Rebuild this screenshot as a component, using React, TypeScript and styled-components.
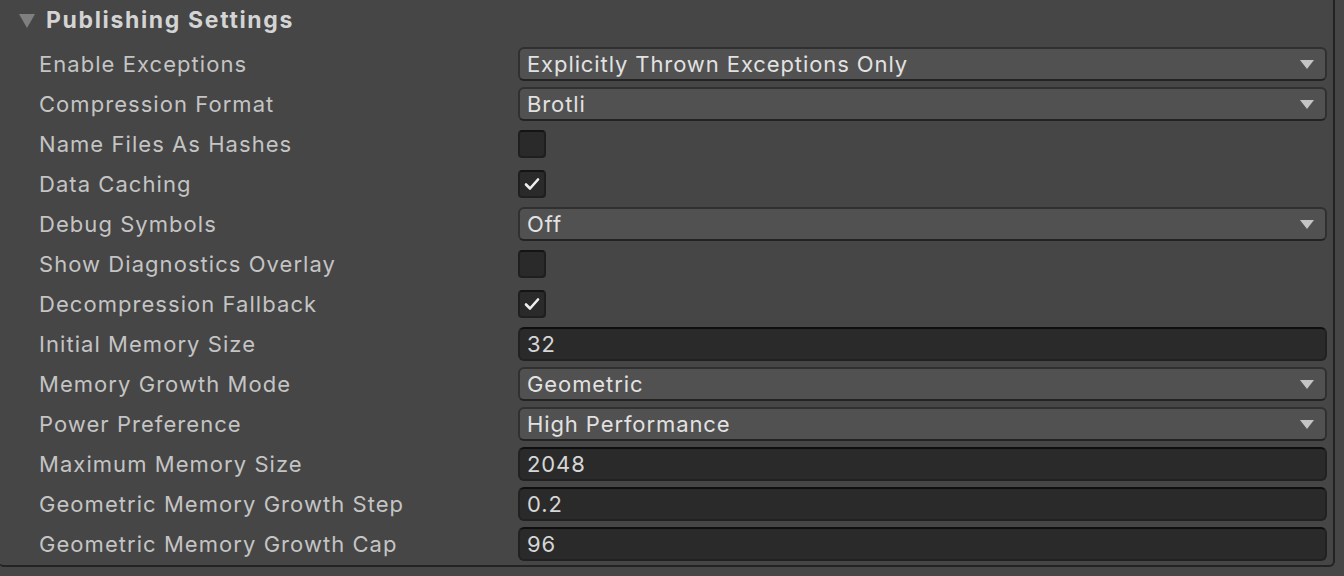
import React from "react";
import styled, { createGlobalStyle } from "styled-components";

const Global = createGlobalStyle`
  html, body { margin: 0; padding: 0; background: #464646; }
  body { font-family: Inter, "Noto Sans", sans-serif; overflow: hidden; }
`;

const Panel = styled.div`
  width: 1337px;
  height: 567px;
  margin-left: -2px;
  box-sizing: border-box;
  background: #464646;
  border-right: 2px solid #232323;
  border-bottom: 2px solid #232323;
  border-bottom-right-radius: 6px;
  border-bottom-left-radius: 6px;
`;

const Header = styled.div`
  height: 40px;
  margin-bottom: 4px;
  display: flex;
  align-items: center;
  padding-left: 21px;
  gap: 11px;
  color: #d4d4d4;
  font-weight: 700;
  font-size: 23px;
  letter-spacing: 1.65px;
`;

const Triangle = styled.span`
  width: 0;
  height: 0;
  border-left: 8px solid transparent;
  border-right: 8px solid transparent;
  border-top: 14px solid #7f7f7f;
  margin-top: 2px;
`;

const Row = styled.div`
  height: 40px;
  display: grid;
  grid-template-columns: 479px 809px;
  align-items: center;
  padding-left: 41px;
`;

const Label = styled.div`
  color: #c4c4c4;
  font-size: 22px;
  letter-spacing: 1.05px;
  white-space: nowrap;
`;

const Dropdown = styled.div`
  height: 34px;
  box-sizing: border-box;
  background: #515151;
  border: 2px solid #303030;
  border-bottom-color: #232323;
  border-radius: 6px;
  display: flex;
  align-items: center;
  padding: 0 10px 0 7px;
  color: #e2e2e2;
  font-size: 22px;
  letter-spacing: 0.9px;
`;

const DropText = styled.span`
  flex: 1;
`;

const Arrow = styled.span`
  width: 0;
  height: 0;
  border-left: 7px solid transparent;
  border-right: 7px solid transparent;
  border-top: 9px solid #c4c4c4;
  margin-right: 1px;
`;

const Field = styled.div`
  height: 34px;
  box-sizing: border-box;
  background: #2a2a2a;
  border: 2px solid #212121;
  border-top-color: #0f0f0f;
  border-radius: 6px;
  display: flex;
  align-items: center;
  padding-left: 7px;
  color: #d6d6d6;
  font-size: 22px;
  letter-spacing: 0.9px;
`;

const Check = styled.div`
  width: 28px;
  height: 28px;
  box-sizing: border-box;
  background: #2a2a2a;
  border: 2px solid #1f1f1f;
  border-top-color: #141414;
  border-radius: 4px;
  display: flex;
  align-items: center;
  justify-content: center;
`;

type Item =
  | { label: string; kind: "dropdown"; value: string }
  | { label: string; kind: "field"; value: string }
  | { label: string; kind: "check"; checked: boolean };

const items: Item[] = [
  { label: "Enable Exceptions", kind: "dropdown", value: "Explicitly Thrown Exceptions Only" },
  { label: "Compression Format", kind: "dropdown", value: "Brotli" },
  { label: "Name Files As Hashes", kind: "check", checked: false },
  { label: "Data Caching", kind: "check", checked: true },
  { label: "Debug Symbols", kind: "dropdown", value: "Off" },
  { label: "Show Diagnostics Overlay", kind: "check", checked: false },
  { label: "Decompression Fallback", kind: "check", checked: true },
  { label: "Initial Memory Size", kind: "field", value: "32" },
  { label: "Memory Growth Mode", kind: "dropdown", value: "Geometric" },
  { label: "Power Preference", kind: "dropdown", value: "High Performance" },
  { label: "Maximum Memory Size", kind: "field", value: "2048" },
  { label: "Geometric Memory Growth Step", kind: "field", value: "0.2" },
  { label: "Geometric Memory Growth Cap", kind: "field", value: "96" },
];

const CheckMark = () => (
  <svg width="18" height="18" viewBox="0 0 18 18">
    <path d="M3 9.5 L7 13.5 L15 4.5" fill="none" stroke="#f0f0f0" strokeWidth="2.6" strokeLinecap="round" strokeLinejoin="round" />
  </svg>
);

const Control = ({ item }: { item: Item }) => {
  if (item.kind === "dropdown")
    return (
      <Dropdown>
        <DropText>{item.value}</DropText>
        <Arrow />
      </Dropdown>
    );
  if (item.kind === "field") return <Field>{item.value}</Field>;
  return <Check>{item.checked && <CheckMark />}</Check>;
};

export default function App() {
  return (
    <>
      <Global />
      <Panel>
        <Header>
          <Triangle />
          Publishing Settings
        </Header>
        {items.map((it) => (
          <Row key={it.label}>
            <Label>{it.label}</Label>
            <Control item={it} />
          </Row>
        ))}
      </Panel>
    </>
  );
}
